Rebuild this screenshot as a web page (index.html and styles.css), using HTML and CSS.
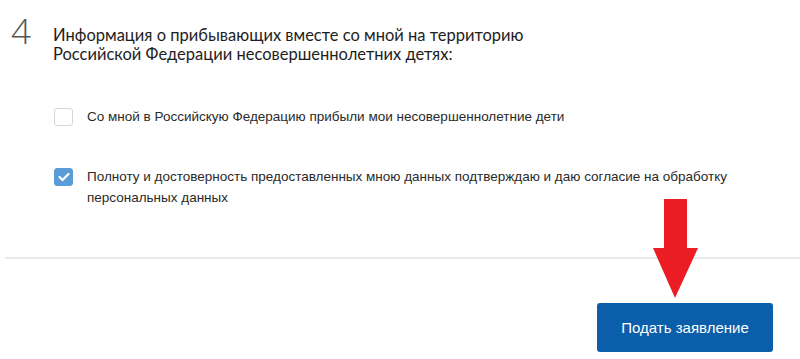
FILE: index.html
```html
<!DOCTYPE html>
<html lang="ru">
<head>
  <meta charset="UTF-8">
  <title>Подать заявление</title>
  <link rel="stylesheet" href="styles.css">
</head>
<body>
  <div class="form">
    <div class="step">
      <div class="step-num">4</div>
      <h2 class="step-title">Информация о прибывающих вместе со мной на территорию<br>Российской Федерации несовершеннолетних детях:</h2>
    </div>

    <div class="options">
      <label class="option">
        <span class="box"></span>
        <span class="option-text">Со мной в Российскую Федерацию прибыли мои несовершеннолетние дети</span>
      </label>
      <label class="option">
        <span class="box checked">
          <svg width="12" height="10" viewBox="0 0 12 10"><path d="M1.5 5 L4.5 8 L10.5 2" fill="none" stroke="#fff" stroke-width="2.2" stroke-linecap="round" stroke-linejoin="round"/></svg>
        </span>
        <span class="option-text">Полноту и достоверность предоставленных мною данных подтверждаю и даю согласие на обработку персональных данных</span>
      </label>
    </div>

    <div class="divider"></div>

    <div class="actions">
      <button class="submit-btn">Подать заявление</button>
    </div>

    <!-- красная стрелка поверх -->
    <svg class="arrow" width="46" height="100" viewBox="0 0 46 100">
      <polygon points="11,0 34,0 34,49 45,49 22,99 0,49 11,49" fill="#ec1c24"/>
    </svg>
  </div>
</body>
</html>
```

FILE: styles.css
```css
:root {
  --text-color: #222;
  --blue: #0b5eaa;
  --check-blue: #5b9cd6;
  --line: #e9e9e9;
}

body {
  margin: 0;
  padding: 0;
  background: #fff;
  color: var(--text-color);
  font-family: 'Liberation Sans', Arial, sans-serif;
}

.form {
  position: relative;
  width: 800px;
  height: 359px;
  overflow: hidden;
}

.step {
  display: flex;
  padding: 14px 0 0 11px;
}

.step-num {
  width: 42px;
  font-family: 'Open Sans', 'Lato', sans-serif;
  font-weight: 300;
  font-size: 35px;
  line-height: 34px;
  color: #555;
}

.step-title {
  margin: 12px 0 0 0;
  font-family: 'Lato', 'Open Sans', sans-serif;
  font-weight: normal;
  font-size: 16.5px;
  line-height: 19px;
  color: #1e1e1e;
}

.options {
  display: flex;
  flex-direction: column;
  gap: 39px;
  padding: 42px 30px 0 54px;
}

.option {
  display: flex;
  align-items: flex-start;
}

.box {
  flex: none;
  box-sizing: border-box;
  width: 19px;
  height: 18px;
  margin-top: 2px;
  margin-right: 14px;
  border: 1px solid #d6d6d6;
  border-radius: 3px;
  background: #fff;
}

.box.checked {
  display: flex;
  align-items: center;
  justify-content: center;
  background: var(--check-blue);
  border-color: var(--check-blue);
}

.option-text {
  font-size: 13.5px;
  line-height: 21px;
  color: #2a2a2a;
}

.divider {
  margin: 49px 0 0 5px;
  border-top: 2px solid var(--line);
}

.actions {
  display: flex;
  justify-content: flex-end;
  padding: 44px 27px 0 0;
}

.submit-btn {
  width: 176px;
  height: 49px;
  border: none;
  border-radius: 3px;
  background: var(--blue);
  color: #fff;
  font-family: 'Liberation Sans', Arial, sans-serif;
  font-size: 15px;
  cursor: pointer;
}

.arrow {
  position: absolute;
  left: 653px;
  top: 199px;
}
```
